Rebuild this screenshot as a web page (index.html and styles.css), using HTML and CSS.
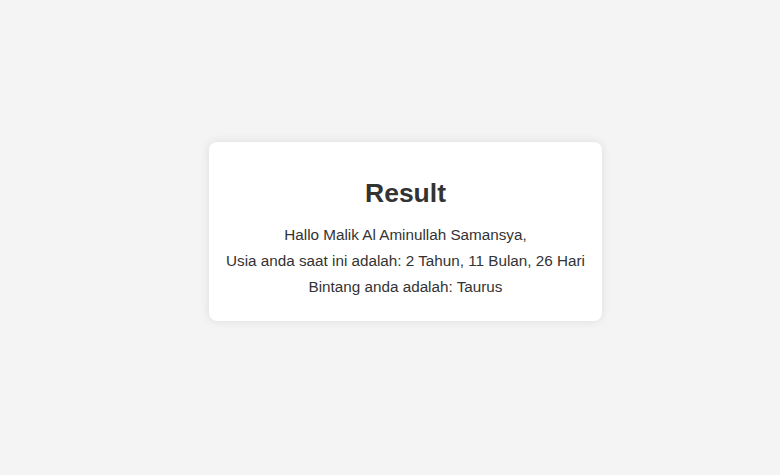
FILE: index.html
```html
<!DOCTYPE html>
<html lang="id">
<head>
<meta charset="utf-8">
<title>Result</title>
<link rel="stylesheet" href="styles.css">
</head>
<body>
<main class="page">
  <section class="card">
    <h2 class="title">Result</h2>
    <p class="line">Hallo Malik Al Aminullah Samansya,</p>
    <p class="line">Usia anda saat ini adalah: 2 Tahun, 11 Bulan, 26 Hari</p>
    <p class="line">Bintang anda adalah: Taurus</p>
  </section>
</main>
</body>
</html>
```
FILE: styles.css
```css
html, body {
  margin: 0;
  padding: 0;
  background: #f4f4f4;
}
body {
  font-family: "Liberation Sans", Arial, sans-serif;
  color: #333;
}
.page {
  box-sizing: border-box;
  height: 475px;
  display: flex;
  justify-content: center;
  align-items: center;
  padding: 0 0 12px 31px;
}
.card {
  box-sizing: border-box;
  width: 393px;
  background: #fff;
  border-radius: 8px;
  box-shadow: 0 0 10px rgba(0, 0, 0, 0.1);
  padding: 36px 8px 21px;
  text-align: center;
}
.title {
  margin: 0 0 14px;
  font-size: 26.5px;
  font-weight: bold;
  line-height: 30px;
}
.line {
  margin: 0;
  font-size: 15.25px;
  line-height: 26px;
}
```
